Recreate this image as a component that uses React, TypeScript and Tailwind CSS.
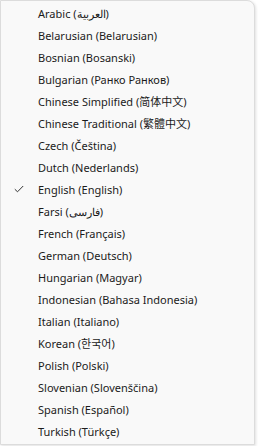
import React from "react";

const items = [
  "Arabic (العربية)",
  "Belarusian (Belarusian)",
  "Bosnian (Bosanski)",
  "Bulgarian (Ранко Ранков)",
  "Chinese Simplified (简体中文)",
  "Chinese Traditional (繁體中文)",
  "Czech (Čeština)",
  "Dutch (Nederlands)",
  "English (English)",
  "Farsi (فارسی)",
  "French (Français)",
  "German (Deutsch)",
  "Hungarian (Magyar)",
  "Indonesian (Bahasa Indonesia)",
  "Italian (Italiano)",
  "Korean (한국어)",
  "Polish (Polski)",
  "Slovenian (Slovenščina)",
  "Spanish (Español)",
  "Turkish (Türkçe)",
];

export default function App() {
  return (
    <div className="w-[258px] h-[446px] bg-white">
      <div
        className="w-[255px] h-[445px] bg-[#f9f9f9] border border-[#dcdcdc] rounded-tr-[8px] shadow-[1px_1px_3px_rgba(0,0,0,0.12)] pt-[1px] flex flex-col"
        style={{ fontFamily: '"Noto Sans", "Noto Sans CJK SC", sans-serif' }}
      >
        {items.map((t) => (
          <div key={t} className="h-[22px] flex items-center text-[11px] text-[#1b1b1b] relative">
            {t === "English (English)" && (
              <svg className="absolute left-[13px] top-[7px]" width="10" height="8" viewBox="0 0 10 8">
                <path d="M0.8 4.2 L3.5 6.8 L9.2 1" fill="none" stroke="#333" strokeWidth="1" />
              </svg>
            )}
            <span className="pl-[37px] leading-none">{t}</span>
          </div>
        ))}
      </div>
    </div>
  );
}
